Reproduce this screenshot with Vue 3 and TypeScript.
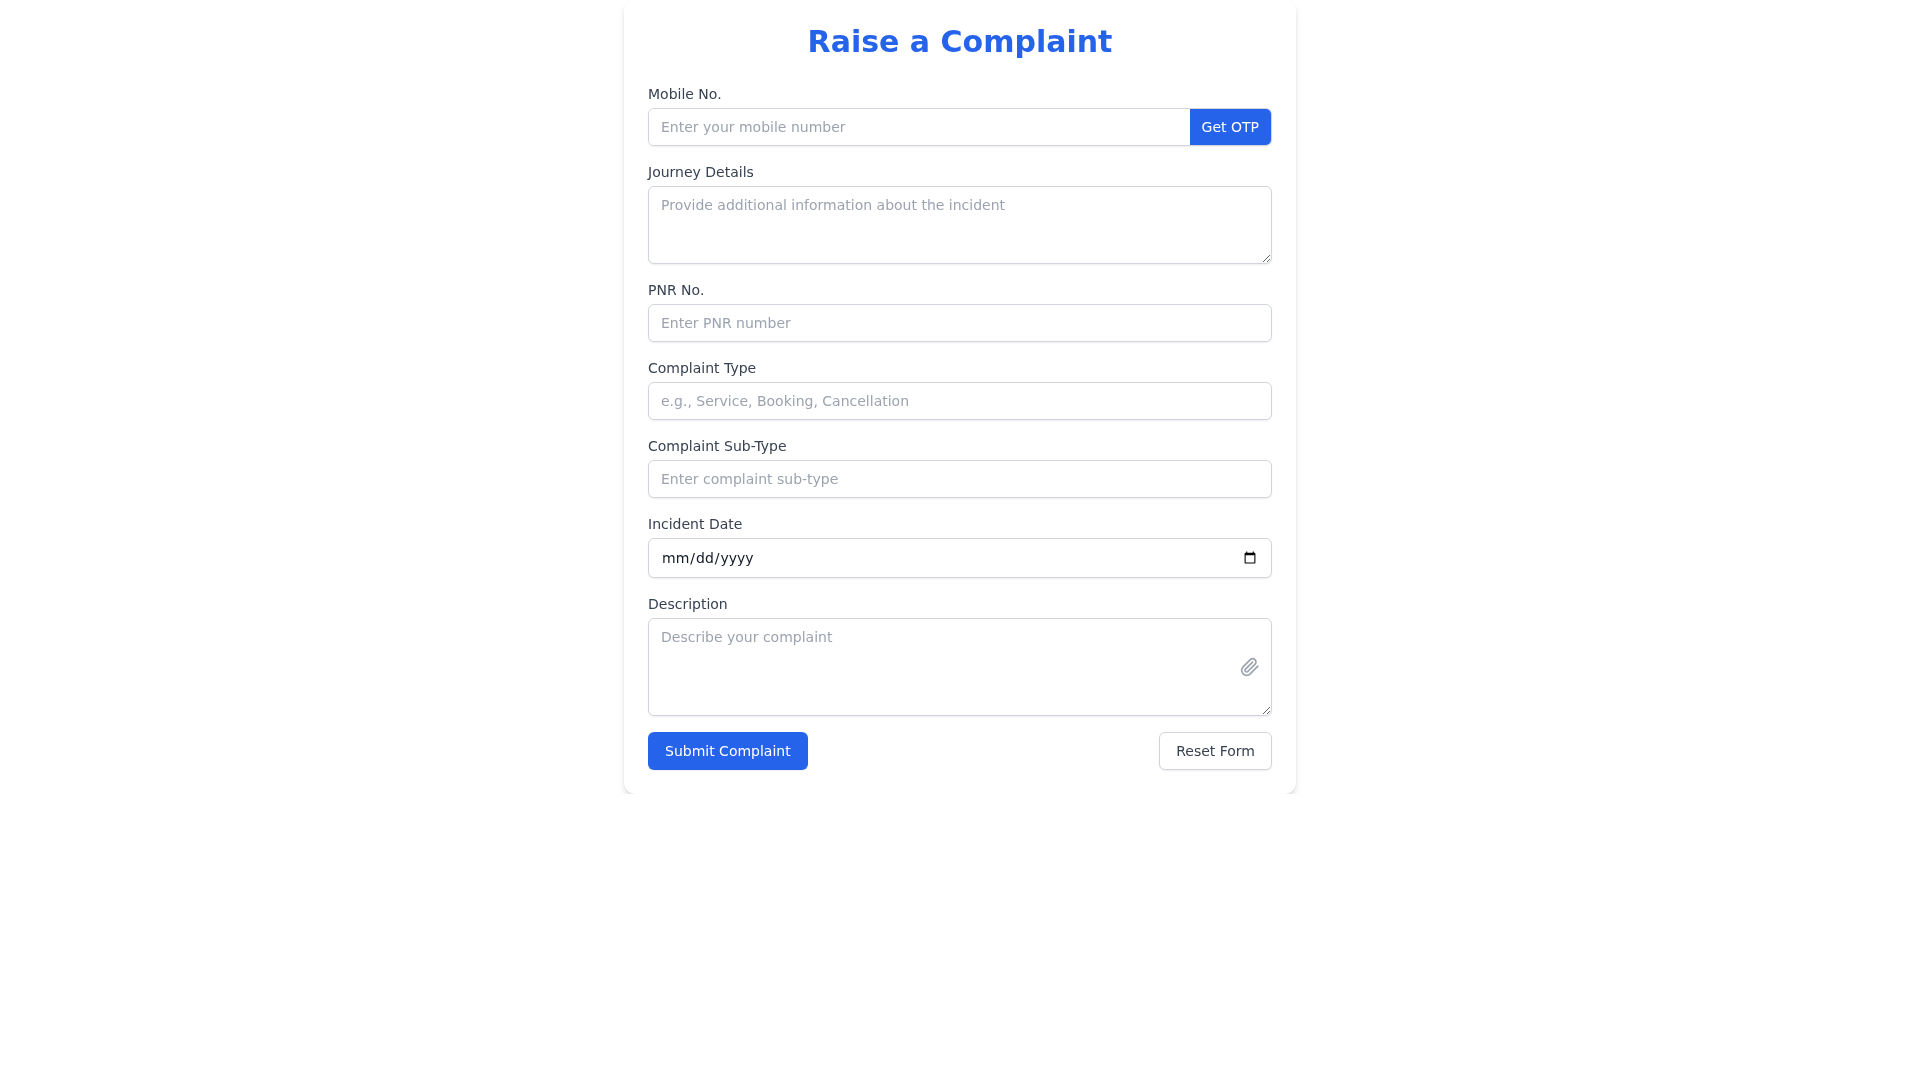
<script setup lang="ts">
const textFields = [
  { label: 'PNR No.', placeholder: 'Enter PNR number' },
  { label: 'Complaint Type', placeholder: 'e.g., Service, Booking, Cancellation' },
  { label: 'Complaint Sub-Type', placeholder: 'Enter complaint sub-type' },
]
</script>

<template>
  <div class="card">
    <h1 class="title">Raise a Complaint</h1>
    <form class="form" @submit.prevent>
      <div class="field">
        <label class="label">Mobile No.</label>
        <div class="otp-row">
          <input class="otp-input" type="text" placeholder="Enter your mobile number" />
          <button class="otp-btn" type="button">Get OTP</button>
        </div>
      </div>
      <div class="field">
        <label class="label">Journey Details</label>
        <textarea class="control area" rows="3" placeholder="Provide additional information about the incident"></textarea>
      </div>
      <div v-for="f in textFields" :key="f.label" class="field">
        <label class="label">{{ f.label }}</label>
        <input class="control" type="text" :placeholder="f.placeholder" />
      </div>
      <div class="field">
        <label class="label">Incident Date</label>
        <input class="control" type="date" />
      </div>
      <div class="field">
        <label class="label">Description</label>
        <div class="desc-wrap">
          <textarea class="control area" rows="4" placeholder="Describe your complaint"></textarea>
          <svg class="clip" viewBox="0 0 24 24" width="20" height="20" fill="none" stroke="#9ca3af" stroke-width="2" stroke-linecap="round" stroke-linejoin="round">
            <path d="m21.44 11.05-9.19 9.19a6 6 0 0 1-8.49-8.49l8.57-8.57A4 4 0 1 1 18 8.84l-8.59 8.57a2 2 0 0 1-2.83-2.83l8.49-8.48" />
          </svg>
        </div>
      </div>
      <div class="actions">
        <button class="submit" type="submit">Submit Complaint</button>
        <button class="reset" type="reset">Reset Form</button>
      </div>
    </form>
  </div>
</template>

<style>
html, body { margin: 0; background: #fff; }
</style>

<style scoped>
.card {
  box-sizing: border-box;
  width: 672px;
  margin: 0 auto;
  padding: 24px;
  background: #fff;
  border-radius: 12px;
  box-shadow: 0 4px 6px rgba(0,0,0,.1), 0 2px 4px rgba(0,0,0,.06);
  font-family: "DejaVu Sans", sans-serif;
  will-change: transform;
}
.title {
  margin: 0 0 24px;
  font-size: 30px;
  line-height: 36px;
  font-weight: 700;
  text-align: center;
  color: #2563eb;
}
.form { display: flex; flex-direction: column; gap: 16px; }
.field { display: flex; flex-direction: column; }
.label {
  margin-bottom: 4px;
  font-size: 14px;
  line-height: 20px;
  color: #374151;
}
.control {
  box-sizing: border-box;
  display: block;
  width: 100%;
  padding: 8px 12px;
  border: 1px solid #d1d5db;
  border-radius: 6px;
  box-shadow: 0 1px 2px rgba(0,0,0,.07);
  background: #fff;
  font-family: inherit;
  font-size: 14px;
  line-height: 20px;
  color: #111827;
  outline: none;
}
.area { resize: vertical; }
.control::placeholder, .otp-input::placeholder { color: #9ca3af; opacity: 1; }
.otp-row {
  display: flex;
  border: 1px solid #d1d5db;
  border-radius: 6px;
  overflow: hidden;
  box-shadow: 0 1px 2px rgba(0,0,0,.07);
}
.otp-input {
  flex: 1;
  min-width: 0;
  padding: 8px 12px;
  border: 0;
  font-family: inherit;
  font-size: 14px;
  line-height: 20px;
  outline: none;
  background: #fff;
}
.otp-btn {
  padding: 0 12px;
  border: 0;
  background: #2563eb;
  color: #fff;
  font-family: inherit;
  font-size: 14px;
  line-height: 20px;
}
.desc-wrap { position: relative; display: flex; }
.clip { position: absolute; right: 12px; top: 39px; }
.actions { display: flex; justify-content: space-between; }
.submit, .reset {
  box-sizing: border-box;
  height: 38px;
  padding: 0 16px;
  border-radius: 6px;
  font-family: inherit;
  font-size: 14px;
  line-height: 20px;
}
.submit {
  border: 1px solid transparent;
  background: #2563eb;
  color: #fff;
  box-shadow: 0 1px 2px rgba(0,0,0,.07);
}
.reset {
  border: 1px solid #d1d5db;
  background: #fff;
  color: #374151;
  box-shadow: 0 1px 2px rgba(0,0,0,.07);
}
</style>
